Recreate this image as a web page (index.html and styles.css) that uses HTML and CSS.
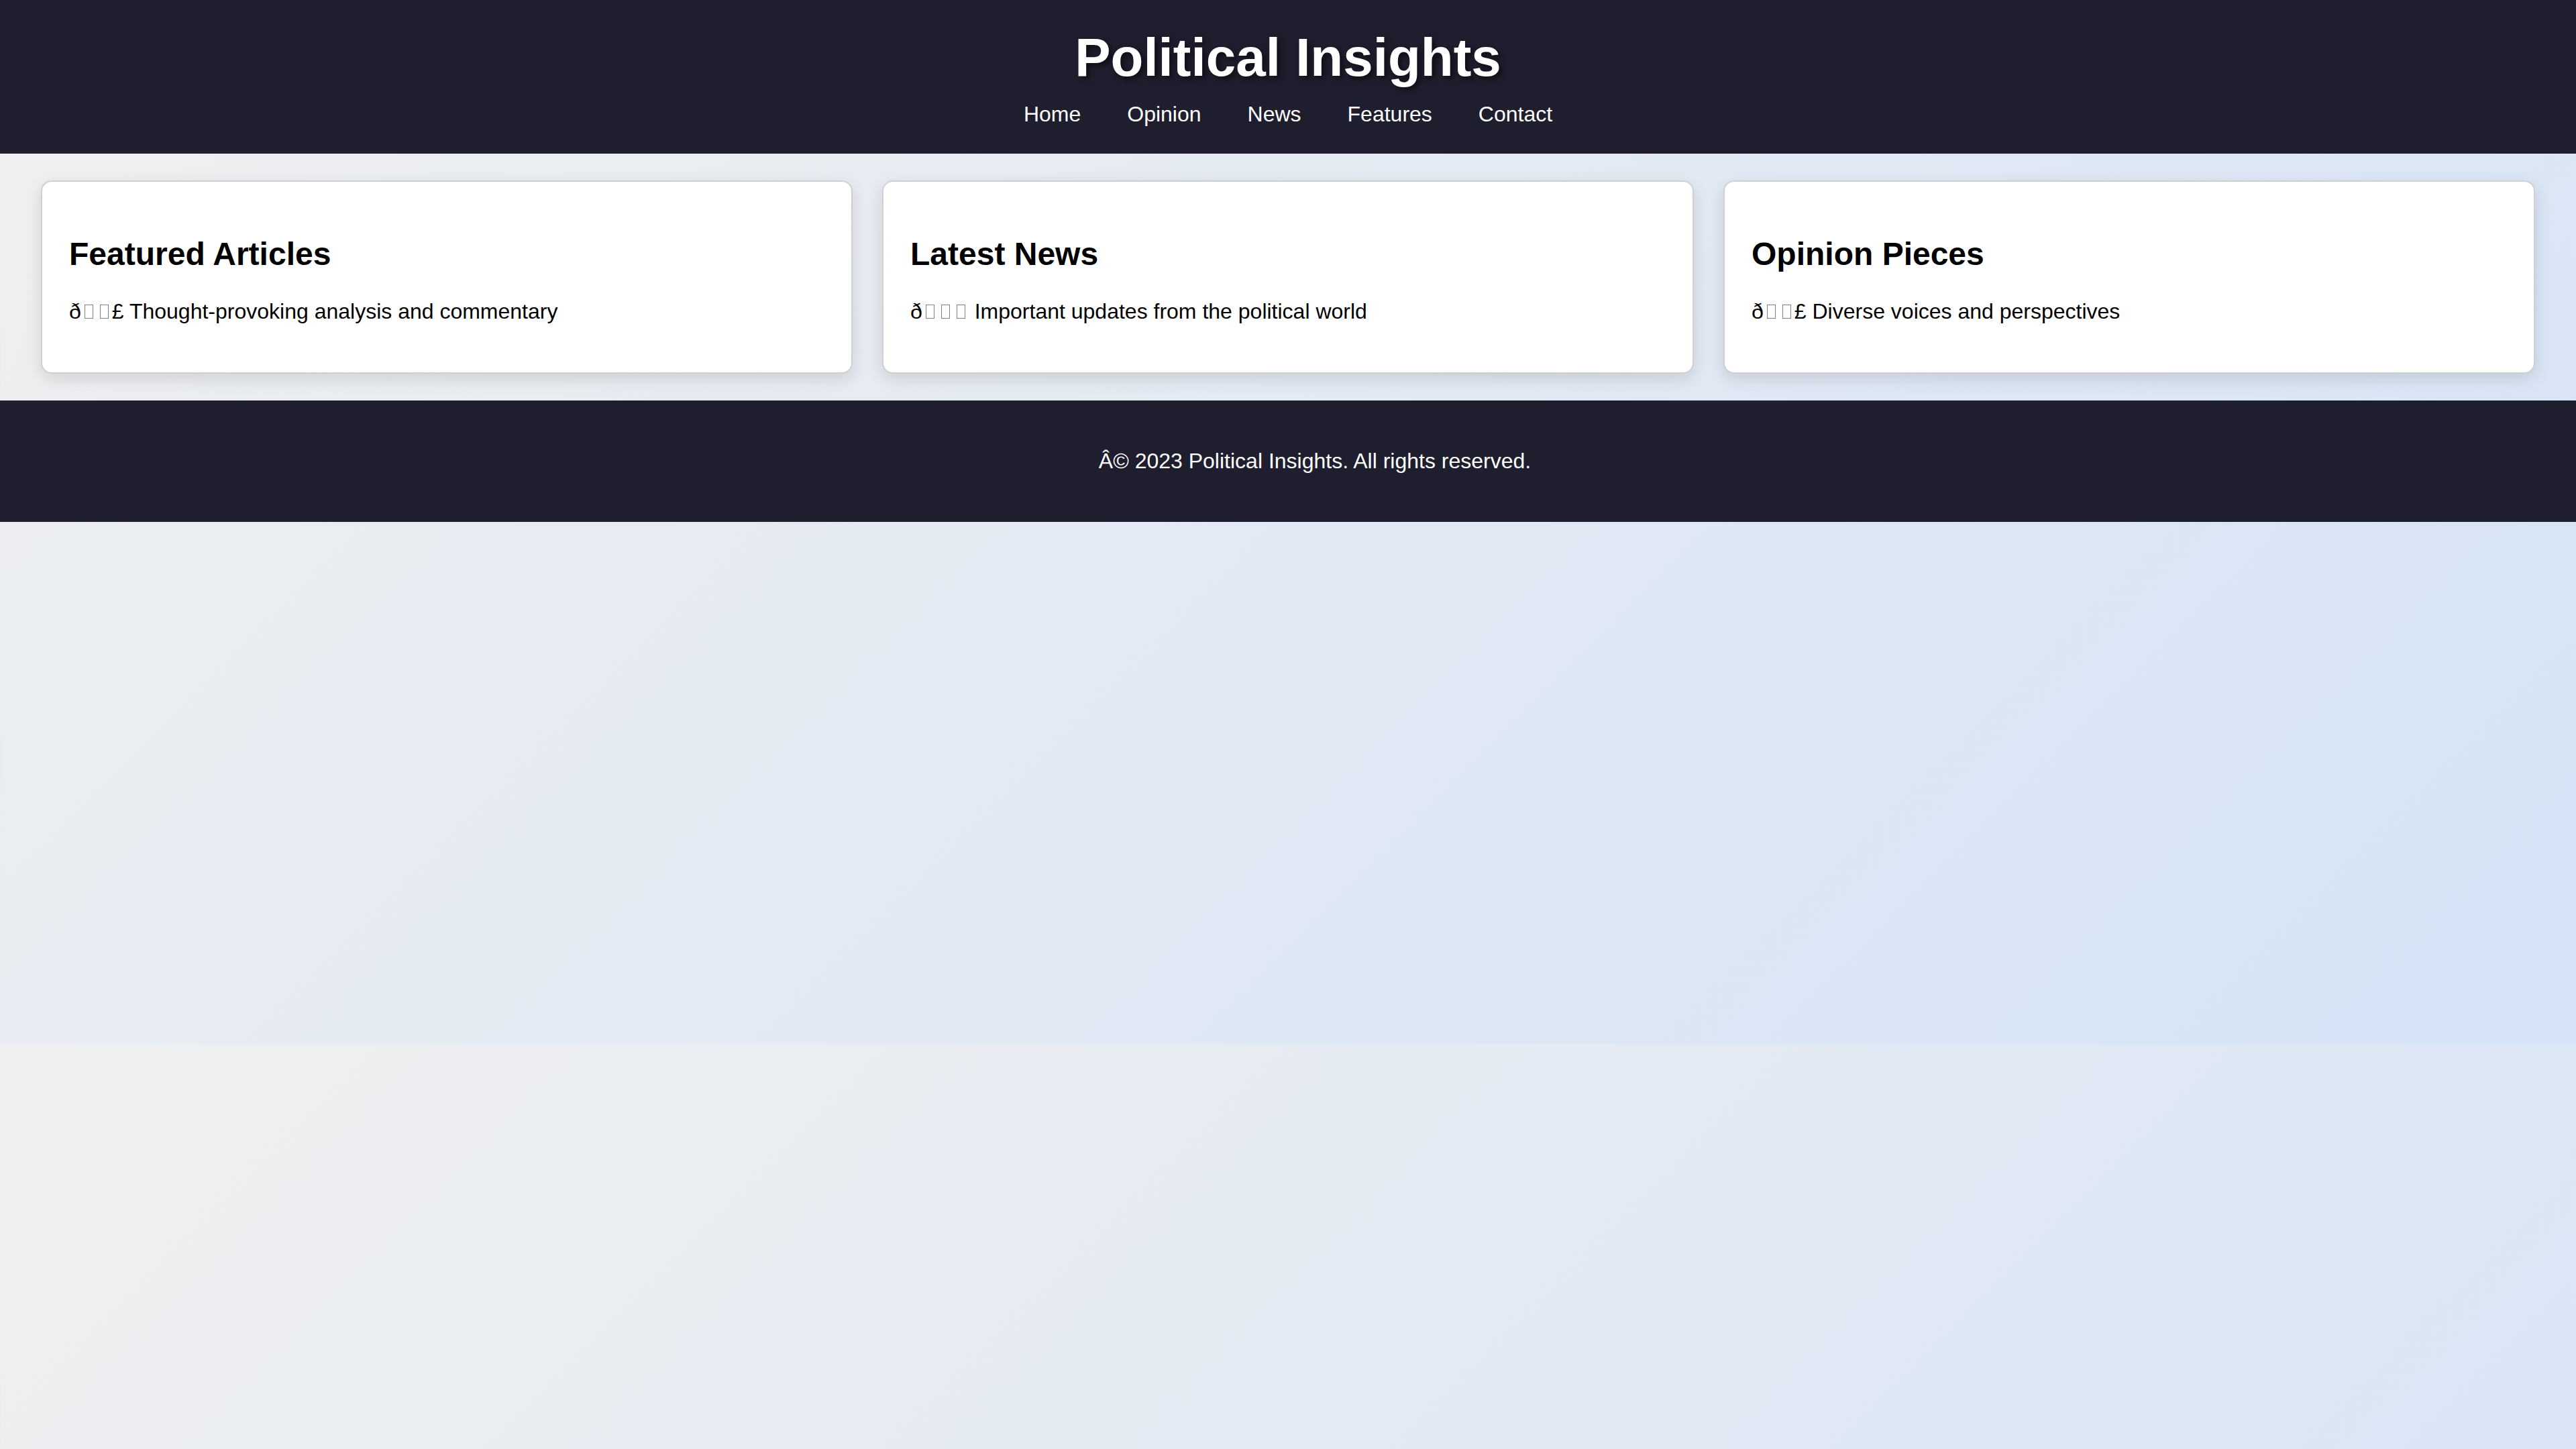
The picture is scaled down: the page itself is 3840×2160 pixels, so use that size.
FILE: index.html
```html
<!DOCTYPE html>
<html lang="en">
<head>
<meta charset="utf-8">
<title>Political Insights</title>
<link rel="stylesheet" href="styles.css">
</head>
<body>
<header class="site-header">
  <h1 class="site-title">Political Insights</h1>
  <nav class="site-nav">
    <ul class="nav-list">
      <li><a class="nav-link" href="#">Home</a></li>
      <li><a class="nav-link" href="#">Opinion</a></li>
      <li><a class="nav-link" href="#">News</a></li>
      <li><a class="nav-link" href="#">Features</a></li>
      <li><a class="nav-link" href="#">Contact</a></li>
    </ul>
  </nav>
</header>
<main class="content">
  <section class="card">
    <h2 class="card-title">Featured Articles</h2>
    <p class="card-text">ð<span class="tofu"></span><span class="tofu"></span>£ Thought-provoking analysis and commentary</p>
  </section>
  <section class="card">
    <h2 class="card-title">Latest News</h2>
    <p class="card-text">ð<span class="tofu"></span><span class="tofu"></span><span class="tofu"></span> Important updates from the political world</p>
  </section>
  <section class="card">
    <h2 class="card-title">Opinion Pieces</h2>
    <p class="card-text">ð<span class="tofu"></span><span class="tofu"></span>£ Diverse voices and perspectives</p>
  </section>
</main>
<footer class="site-footer">
  <p class="footer-text">Â© 2023 Political Insights. All rights reserved.</p>
</footer>
</body>
</html>
```

FILE: styles.css
```css
html {
  margin: 0;
}

body {
  margin: 0;
  font-family: "Liberation Sans", Arial, Helvetica, sans-serif;
  font-size: 32px;
  color: #000;
  background-image: linear-gradient(135deg, #f0f0f0 0%, #d4e3f7 100%);
  background-size: 100% 1556px;
  background-repeat: repeat;
}

.site-header {
  background: #1f1e2e;
  color: #fff;
  text-align: center;
  padding: 40px;
}

.site-title {
  margin: 0 0 20px;
  font-size: 80px;
  font-weight: bold;
  text-shadow: 4px 4px 8px rgba(0, 0, 0, 0.6);
}

.nav-list {
  list-style: none;
  margin: 0;
  padding: 0;
  display: flex;
  justify-content: center;
  gap: 69px;
}

.nav-link {
  color: #fff;
  text-decoration: none;
}

.content {
  display: grid;
  grid-template-columns: repeat(3, 1fr);
  gap: 44px;
  padding: 40px 61px;
}

.card {
  background: #fff;
  border: 2px solid #d0d0d0;
  border-radius: 16px;
  padding: 0 40px;
  box-shadow: 0 8px 24px rgba(0, 0, 0, 0.12);
  overflow: hidden;
}

.card-title {
  font-size: 48px;
  font-weight: bold;
  margin: 80px 0 40px;
}

.card-text {
  margin: 0 0 72px;
}

.tofu {
  display: inline-block;
  box-sizing: border-box;
  width: 13px;
  height: 21px;
  margin: 0 5px 0 5px;
  border: 1.5px solid #808080;
  vertical-align: baseline;
}

.site-footer {
  background: #1f1e2e;
  color: #fff;
  text-align: center;
  padding: 72px 40px 72px 120px;
}

.footer-text {
  margin: 0;
}
```
